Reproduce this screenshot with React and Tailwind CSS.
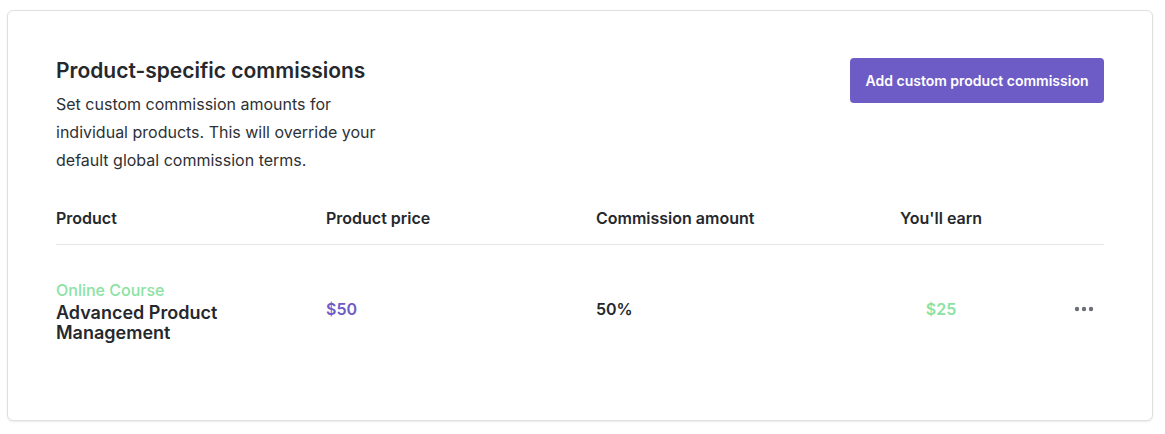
import React from "react";

const rows = [
  {
    category: "Online Course",
    name: "Advanced Product Management",
    price: "$50",
    commission: "50%",
    earn: "$25",
  },
];

const App = () => {
  return (
    <div className="w-full min-h-screen bg-white pt-[10px] pl-[7px] font-['Inter',sans-serif] text-[#25282d]">
      <div className="w-[1146px] rounded-md border border-[#dedfe1] bg-white shadow-[0_1px_2px_rgba(0,0,0,0.08)] px-12 pt-[47px] pb-12">
        <div className="flex justify-between items-start">
          <div>
            <h2 className="mt-px text-[21px] leading-6 font-semibold">
              Product-specific commissions
            </h2>
            <p className="mt-[7px] max-w-[330px] text-[16px] leading-[28px] text-[#2d3136]">
              Set custom commission amounts for individual products. This will override your default global commission terms.
            </p>
          </div>
          <button className="h-[45px] w-[254px] rounded bg-[#6e5cc6] text-white text-[14px] font-semibold">
            Add custom product commission
          </button>
        </div>

        <div className="mt-[18px] grid grid-cols-[270px_270px_270px_150px_1fr] border-b border-[#e4e5e9] py-4 text-[16px] leading-5 font-semibold">
          <span>Product</span>
          <span>Product price</span>
          <span>Commission amount</span>
          <span className="text-center">You'll earn</span>
          <span></span>
        </div>

        {rows.map((row, index) => (
          <div
            key={index}
            className="grid grid-cols-[270px_270px_270px_150px_1fr] items-center pt-[35px] pb-[29px]"
          >
            <div>
              <div className="text-[16px] leading-5 font-medium text-[#8ce2a3]">
                {row.category}
              </div>
              <div className="mt-[3px] w-[220px] text-[18px] leading-5 font-semibold">
                {row.name}
              </div>
            </div>
            <span className="mb-[6px] text-[16px] font-semibold text-[#6e5cc6]">{row.price}</span>
            <span className="mb-[6px] text-[16px] font-semibold">{row.commission}</span>
            <span className="mb-[6px] text-center text-[16px] font-semibold text-[#8ce2a3]">{row.earn}</span>
            <div className="mb-[6px] flex justify-end pr-[10px]">
              <svg width="20" height="6" viewBox="0 0 20 6" fill="#6b6f76">
                <circle cx="3" cy="3" r="2.2" />
                <circle cx="10" cy="3" r="2.2" />
                <circle cx="17" cy="3" r="2.2" />
              </svg>
            </div>
          </div>
        ))}
      </div>
    </div>
  );
};

export default App;
